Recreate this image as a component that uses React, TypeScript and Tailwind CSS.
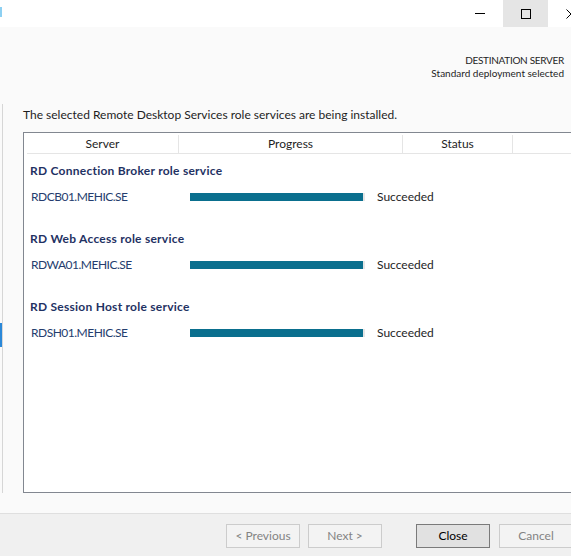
import { FC } from "react";

const groups = [
  { title: "RD Connection Broker role service", server: "RDCB01.MEHIC.SE" },
  { title: "RD Web Access role service", server: "RDWA01.MEHIC.SE" },
  { title: "RD Session Host role service", server: "RDSH01.MEHIC.SE" },
];

const WizardButton: FC<{ label: string; disabled?: boolean; primary?: boolean; className?: string }> = ({
  label,
  disabled,
  primary,
  className = "",
}) => (
  <button
    type="button"
    className={
      "w-[74px] h-[24px] shrink-0 border text-[12px] leading-none flex items-center justify-center " +
      (primary
        ? "bg-[#e1e1e1] border-[#7a7a7a] text-black "
        : "bg-[#f3f3f3] border-[#cccccc] text-[#838383] ") +
      className
    }
    disabled={disabled}
  >
    {label}
  </button>
);

const App: FC = () => {
  return (
    <div
      className="w-[571px] h-[556px] overflow-hidden flex flex-col bg-[#fafafa] text-black"
      style={{ fontFamily: "Lato, 'Liberation Sans', sans-serif" }}
    >
      {/* title bar */}
      <div className="h-[27px] shrink-0 bg-white flex">
        <div className="w-[2px] h-[10px] mt-[7px] bg-[#8dd0f2]" />
        <div className="ml-auto mr-[-23px] flex shrink-0">
          <div className="w-[46px] h-[27px] flex items-center justify-center">
            <div className="w-[10px] h-px bg-black" />
          </div>
          <div className="w-[45px] h-[27px] bg-[#e5e5e5] flex items-center justify-center">
            <div className="w-[10px] h-[10px] border border-black" />
          </div>
          <div className="w-[46px] h-[27px] flex items-center justify-center">
            <svg width="10" height="10" viewBox="0 0 10 10">
              <path d="M0.5 0.5 L9.5 9.5 M9.5 0.5 L0.5 9.5" stroke="#000" strokeWidth="1" />
            </svg>
          </div>
        </div>
      </div>

      {/* destination server */}
      <div className="pt-[27px] pr-[7px] text-right text-[10px] leading-[13px] text-[#1e1e1e]">
        <div className="tracking-[-0.3px]">DESTINATION SERVER</div>
        <div>Standard deployment selected</div>
      </div>

      {/* main */}
      <div className="mt-[24px] h-[389px] flex shrink-0">
        <div className="w-[23px] shrink-0 flex">
          <div className="w-[2px] flex flex-col">
            <div className="h-[219px]" />
            <div className="h-[24px] bg-[#2b88d8]" />
          </div>
          <div className="w-px bg-[#d6d6d6]" />
        </div>

        <div className="flex-1 flex flex-col pt-[3px] min-w-0">
          <div className="text-[12px] leading-[16px] text-[#1e1e1e] whitespace-nowrap">
            The selected Remote Desktop Services role services are being installed.
          </div>
          <div className="mt-[9px] flex-1 w-[570px] shrink-0 border border-[#828790] bg-white flex flex-col">
            <div className="ml-[3px] h-[21px] flex border-b border-[#e5e5e5] text-[12px] text-[#1e1e1e] pt-[2px]">
              <div className="w-[152px] border-r border-[#e5e5e5] flex items-center justify-center">Server</div>
              <div className="w-[224px] border-r border-[#e5e5e5] flex items-center justify-center">Progress</div>
              <div className="w-[110px] border-r border-[#e5e5e5] flex items-center justify-center">Status</div>
              <div className="flex-1" />
            </div>

            <div className="pt-[9px] flex flex-col gap-[26px]">
              {groups.map((g) => (
                <div key={g.server} className="flex flex-col gap-[10px]">
                  <div className="pl-[6px] h-[16px] text-[12px] leading-[16px] font-bold tracking-[0.25px] text-[#1f3263] whitespace-nowrap">
                    {g.title}
                  </div>
                  <div className="pl-[7px] h-[16px] flex items-center text-[12px] leading-[16px]">
                    <div className="w-[159px] shrink-0 text-[#253d6e] tracking-[-0.5px] whitespace-nowrap">{g.server}</div>
                    <div className="w-[175px] h-[8px] shrink-0 bg-[#e6e6e6] flex">
                      <div className="w-[173px] h-full bg-[#0a6f8e]" />
                    </div>
                    <div className="ml-[12px] text-[#1e1e1e]">Succeeded</div>
                  </div>
                </div>
              ))}
            </div>
          </div>
        </div>
      </div>

      {/* footer */}
      <div className="mt-[20px] h-[43px] shrink-0 border-t border-[#dfdfdf] bg-[#f0f0f0] flex pt-[10px] pl-[226px]">
        <WizardButton label="< Previous" disabled />
        <WizardButton label="Next >" disabled className="ml-[8px]" />
        <WizardButton label="Close" primary className="ml-[34px]" />
        <WizardButton label="Cancel" disabled className="ml-[9px]" />
      </div>
    </div>
  );
};

export default App;
